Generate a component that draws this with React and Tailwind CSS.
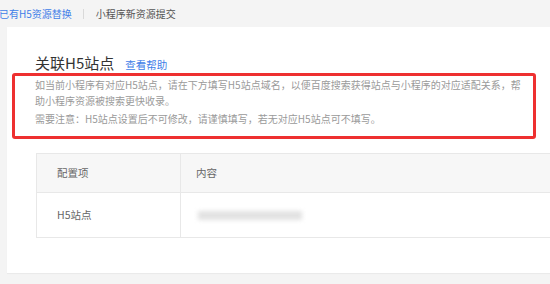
export default function App() {
  const font = { fontFamily: '"Noto Sans CJK SC", "Noto Sans", sans-serif' };
  return (
    <div style={font} className="relative w-[550px] h-[284px] overflow-hidden bg-[#f4f4f4]">
      <div className="h-[27px] flex items-center text-[10px] leading-none">
        <span className="text-[#3f7ee8] -ml-[1px]">已有H5资源替换</span>
        <span className="ml-[11px] w-px h-[10px] bg-[#d9d9d9]"></span>
        <span className="text-[#555] ml-[12px]">小程序新资源提交</span>
      </div>
      <div className="ml-[7px] w-[620px] h-[246px] bg-white pt-[26px] pl-[28px] shadow-[0_1px_1px_rgba(0,0,0,0.04)]">
        <div className="flex items-end h-[20px]">
          <span className="text-[15px] leading-[20px] text-[#333]">关联H5站点</span>
          <span className="ml-[11px] text-[10.5px] leading-[16px] text-[#3f7ee8]">查看帮助</span>
        </div>
        <div className="mt-[4px] w-[492px] text-[10px] leading-[16px] text-[#9a9a9a]">
          <p>如当前小程序有对应H5站点，请在下方填写H5站点域名，以便百度搜索获得站点与小程序的对应适配关系，帮助小程序资源被搜索更快收录。</p>
          <p className="mt-[2px]">需要注意：H5站点设置后不可修改，请谨慎填写，若无对应H5站点可不填写。</p>
        </div>
        <div className="mt-[26px] ml-[1px] border border-[#e8e8e8] border-r-0 text-[10.5px] text-[#666]">
          <div className="flex h-[39px] bg-[#f7f7f7] border-b border-[#e8e8e8]">
            <div className="w-[144px] border-r border-[#e8e8e8] flex items-center pl-[20px]">配置项</div>
            <div className="flex-1 flex items-center pl-[15px]">内容</div>
          </div>
          <div className="flex h-[44px]">
            <div className="w-[144px] border-r border-[#e8e8e8] flex items-center pl-[20px]">H5站点</div>
            <div className="flex-1 flex items-center pl-[17px]">
              <div className="w-[104px] h-[9px] bg-[#e2e2e2] blur-[2px]"></div>
            </div>
          </div>
        </div>
      </div>
      <div className="absolute left-[12px] top-[73px] w-[524px] h-[66px] border-[3px] border-[#ee3030] rounded-[3px]"></div>
    </div>
  );
}
